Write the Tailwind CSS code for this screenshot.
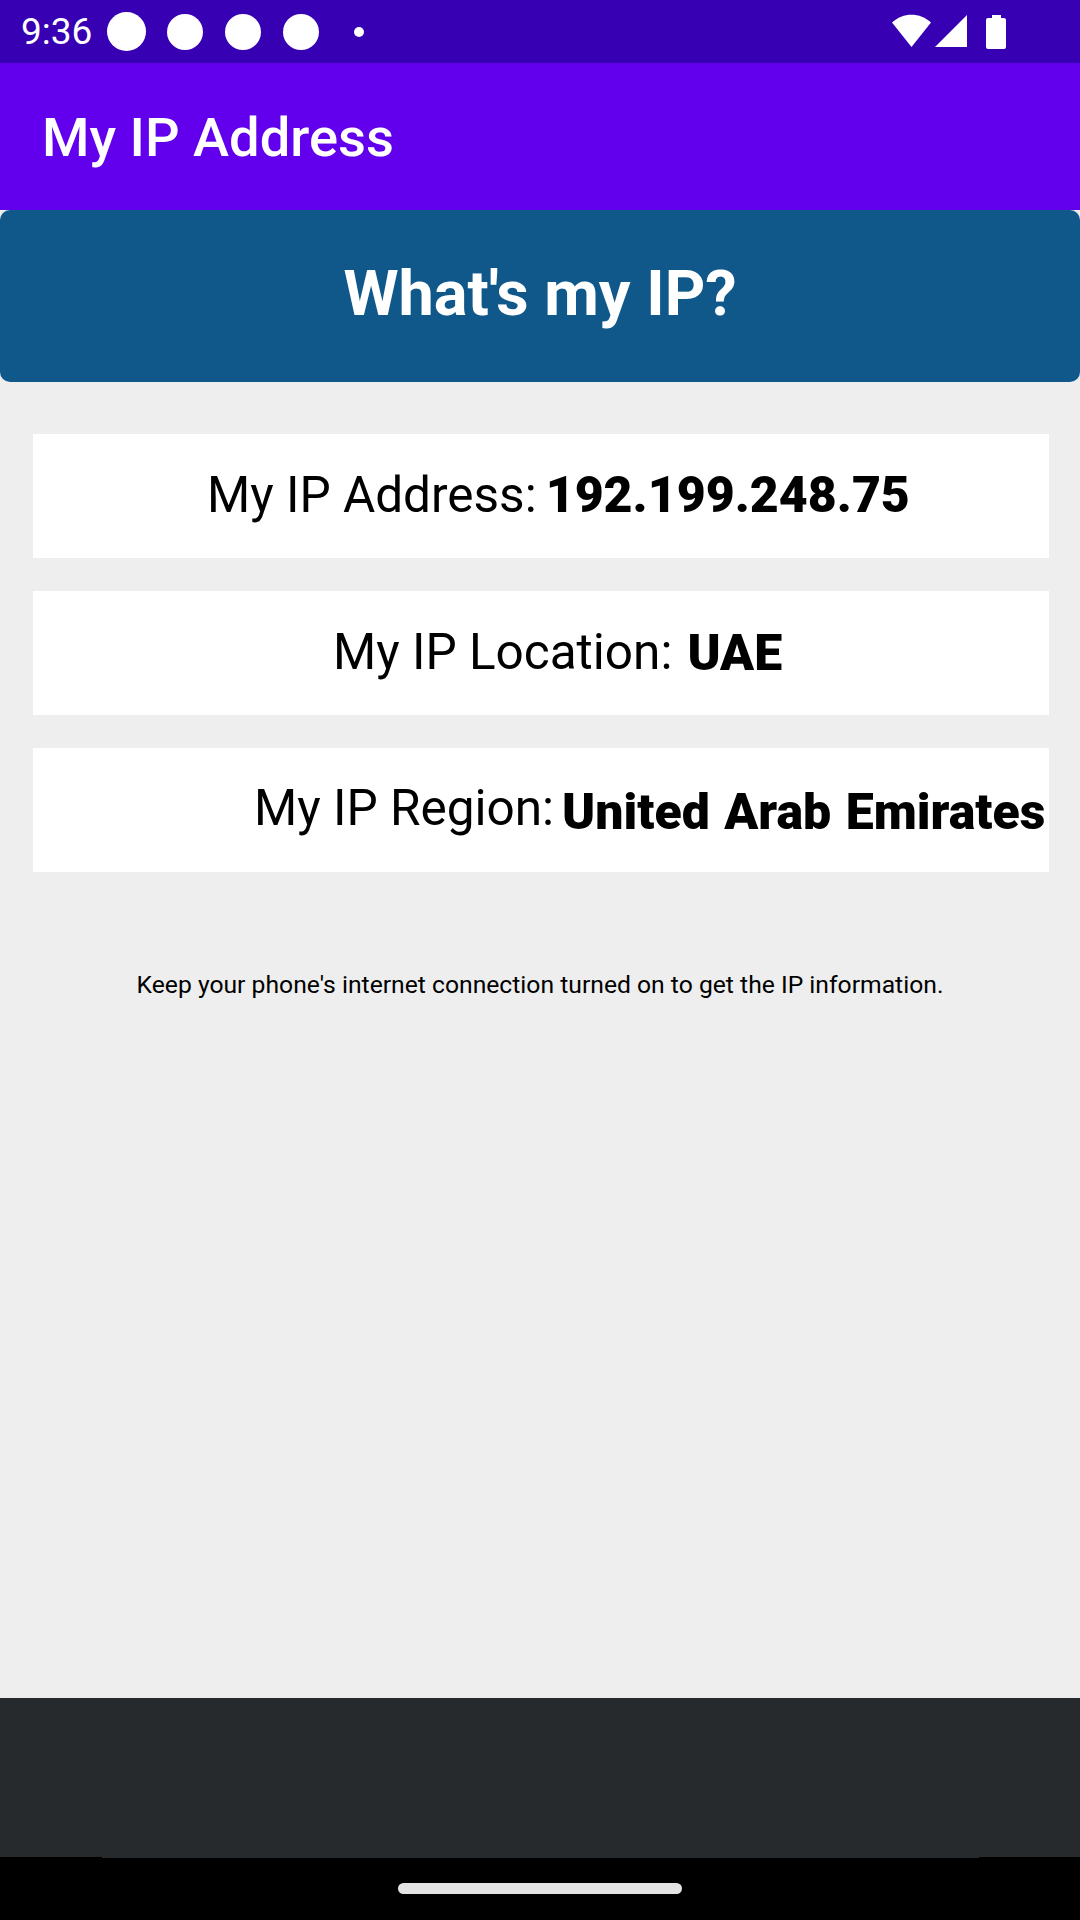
<!DOCTYPE html>
<html lang="en">
<head>
    <meta charset="UTF-8">
    <meta name="viewport" content="width=device-width, initial-scale=1.0">
    <title>My IP Address</title>
    <script src="https://cdn.jsdelivr.net/npm/@tailwindcss/browser@4"></script>
</head>
<body class="bg-[#eeeeee] text-black font-['Roboto',sans-serif]">
    <div class="flex flex-col w-[1080px] h-[1920px] overflow-hidden">
        <!-- Status bar -->
        <div class="h-[63px] shrink-0 bg-[#3700b3] flex items-center text-white">
            <span class="ml-[21px] w-[72px] text-[37px] leading-none whitespace-nowrap">9:36</span>
            <span class="ml-[14px] w-[39px] h-[39px] rounded-full bg-white"></span>
            <span class="ml-[21px] w-[36px] h-[36px] rounded-full bg-white"></span>
            <span class="ml-[22px] w-[36px] h-[36px] rounded-full bg-white"></span>
            <span class="ml-[22px] w-[36px] h-[36px] rounded-full bg-white"></span>
            <span class="ml-[35px] w-[10px] h-[10px] rounded-full bg-white"></span>
            <svg class="ml-auto mr-[74px]" width="116" height="36" viewBox="0 0 116 36" fill="#fff">
                <path d="M2 8.5 C 13 -2 30 -2 41 8.5 L21.5 33 Z"/>
                <path d="M45 33 L77 1 L77 33 Z"/>
                <path d="M98 4 L102 4 L102 1 L111 1 L111 4 L114 4 Q116 4 116 6 L116 33 Q116 35 114 35 L98 35 Q96 35 96 33 L96 6 Q96 4 98 4 Z"/>
            </svg>
        </div>

        <!-- App bar -->
        <div class="h-[147px] shrink-0 bg-[#6200ee] flex items-center pl-[42px] pt-[3px] text-white text-[54.3px] font-medium">My IP Address</div>

        <!-- Header -->
        <div class="h-[172px] shrink-0 bg-[#11588a] rounded-[10px] flex items-center justify-center pb-[4px] text-white text-[63px] font-bold">What's my IP?</div>

        <!-- Info rows -->
        <div class="flex flex-col gap-[33px] mt-[52px] mx-[33px] w-[1016px]">
            <div class="h-[124px] bg-white flex items-center pl-[174px] text-[49.5px] whitespace-nowrap">
                <span class="mb-[2px]">My IP Address:</span>
                <span class="ml-[9px] mb-[2px] font-black text-[50px]">192.199.248.75</span>
            </div>
            <div class="h-[124px] bg-white flex items-center pl-[300px] text-[49.5px] whitespace-nowrap">
                <span class="mb-[2px]">My IP Location:</span>
                <span class="ml-[15px] font-black text-[50px]">UAE</span>
            </div>
            <div class="h-[124px] bg-white flex items-center pl-[221px] text-[49.5px] whitespace-nowrap">
                <span class="mb-[3px]">My IP Region:</span>
                <span class="ml-[8px] mt-[4px] font-black text-[50px] [word-spacing:2px]">United Arab Emirates</span>
            </div>
        </div>

        <p class="mt-[96px] text-center text-[24.7px] leading-[33px]">Keep your phone's internet connection turned on to get the IP information.</p>

        <!-- Bottom area -->
        <div class="mt-auto h-[159px] shrink-0 bg-[#272a2c]"></div>
        <div class="h-[63px] shrink-0 bg-black flex flex-col items-center">
            <div class="w-[877px] h-[1px] bg-[#272a2c]"></div>
            <div class="w-[284px] h-[11px] mt-[25px] rounded-full bg-[#e4e4e4]"></div>
        </div>
    </div>
</body>
</html>
